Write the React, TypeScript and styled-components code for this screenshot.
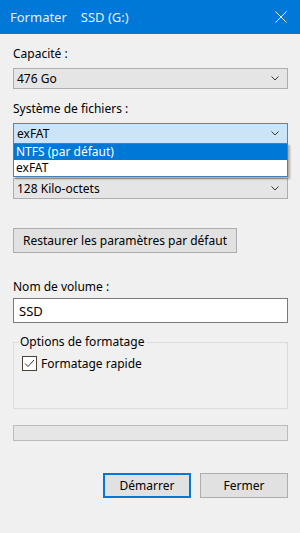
import styled, { createGlobalStyle } from 'styled-components'

const GlobalStyle = createGlobalStyle`
  html, body {
    margin: 0;
    padding: 0;
    background: #f0f0f0;
  }
  body {
    font-family: 'Noto Sans', 'Liberation Sans', sans-serif;
    font-size: 12px;
    color: #000;
  }
`

const Window = styled.div`
  width: 300px;
  height: 533px;
  background: #f0f0f0;
  display: flex;
  flex-direction: column;
  overflow: hidden;
`

const TitleBar = styled.header`
  height: 34px;
  background: #0078d7;
  color: #e6eef8;
  display: flex;
  align-items: center;
  padding: 0 13px 0 10px;
  font-size: 13px;
`

const Title = styled.div`
  flex: 1;
  display: flex;
  gap: 14px;
`

const CloseIcon = styled.svg`
  width: 12px;
  height: 12px;
`

const Body = styled.main`
  display: flex;
  flex-direction: column;
  padding: 12px 12px 0 13px;
`

const Label = styled.div<{ $top?: number; $gap?: number }>`
  line-height: 16px;
  height: 16px;
  margin-top: ${(p) => p.$top ?? 0}px;
  margin-bottom: ${(p) => p.$gap ?? 6}px;
`

const ComboWrap = styled.div`
  position: relative;
`

const Combo = styled.div<{ $focused?: boolean }>`
  height: 21px;
  box-sizing: border-box;
  display: flex;
  align-items: center;
  justify-content: space-between;
  padding: 0 8px 0 3px;
  background: ${(p) => (p.$focused ? '#cce4f7' : '#e5e5e5')};
  border: 1px solid ${(p) => (p.$focused ? '#3d8ad5' : '#adadad')};
`

const Chevron = styled.svg`
  width: 8px;
  height: 5px;
`

const DropList = styled.ul`
  position: absolute;
  top: 20px;
  left: 0;
  right: 0;
  margin: 0;
  padding: 0;
  list-style: none;
  background: #fff;
  border: 1px solid #4a7eb4;
  box-shadow: 2px 2px 2px rgba(60, 40, 20, 0.35);
  z-index: 2;
`

const DropItem = styled.li<{ $selected?: boolean }>`
  height: 16px;
  line-height: 16px;
  padding: 0 2px;
  background: ${(p) => (p.$selected ? '#0078d7' : '#fff')};
  color: ${(p) => (p.$selected ? '#fff' : '#000')};
`

const Button = styled.button<{ $primary?: boolean }>`
  height: 25px;
  box-sizing: border-box;
  font-family: inherit;
  font-size: 12px;
  color: #000;
  background: #e1e1e1;
  border: 1px solid ${(p) => (p.$primary ? '#0078d7' : '#adadad')};
  box-shadow: ${(p) => (p.$primary ? 'inset 0 0 0 1px #0078d7' : 'none')};
  padding: 0;
  width: 88px;
`

const RestoreButton = styled(Button)`
  width: 224px;
  margin-top: 29px;
  align-self: flex-start;
`

const TextInput = styled.div`
  height: 25px;
  box-sizing: border-box;
  background: #fff;
  border: 1px solid #7a7a7a;
  display: flex;
  align-items: center;
  padding: 0 5px;
  font-size: 13px;
`

const GroupBox = styled.fieldset`
  margin: 11px 0 0;
  padding: 0 8px;
  min-width: 0;
  height: 75px;
  box-sizing: border-box;
  border: 1px solid #dcdcdc;
`

const Legend = styled.legend`
  padding: 0 1px;
  margin-left: -3px;
  line-height: 16px;
`

const CheckRow = styled.label`
  display: flex;
  align-items: center;
  gap: 4px;
  margin-top: 5px;
`

const CheckBox = styled.span`
  width: 13px;
  height: 13px;
  border: 1px solid #4b4036;
  background: #fff;
  display: flex;
  align-items: center;
  justify-content: center;
`

const Progress = styled.div`
  height: 16px;
  margin-top: 16px;
  box-sizing: border-box;
  background: #e6e6e6;
  border: 1px solid #bcbcbc;
`

const Footer = styled.div`
  display: flex;
  justify-content: flex-end;
  gap: 9px;
  margin-top: 32px;
`

const ChevronDown = () => (
  <Chevron viewBox="0 0 8 5">
    <path d="M0.5 0.5 L4 4 L7.5 0.5" fill="none" stroke="#3a3530" strokeWidth="1" />
  </Chevron>
)

const App = () => {
  return (
    <Window>
      <GlobalStyle />
      <TitleBar>
        <Title>
          <span>Formater</span>
          <span>SSD (G:)</span>
        </Title>
        <CloseIcon viewBox="0 0 12 12">
          <path d="M0.5 0.5 L11.5 11.5 M11.5 0.5 L0.5 11.5" stroke="#f2f6fc" strokeWidth="1" />
        </CloseIcon>
      </TitleBar>
      <Body>
        <Label>Capacité :</Label>
        <Combo>
          <span>476 Go</span>
          <ChevronDown />
        </Combo>

        <Label $top={12}>Système de fichiers :</Label>
        <ComboWrap>
          <Combo $focused>
            <span>exFAT</span>
            <ChevronDown />
          </Combo>
          <DropList>
            <DropItem $selected>NTFS (par défaut)</DropItem>
            <DropItem>exFAT</DropItem>
          </DropList>
        </ComboWrap>

        {/* the allocation-size label sits under the open list */}
        <Label $top={12} aria-hidden />
        <Combo>
          <span>128 Kilo-octets</span>
          <ChevronDown />
        </Combo>

        <RestoreButton>Restaurer les paramètres par défaut</RestoreButton>

        <Label $top={26} $gap={3}>Nom de volume :</Label>
        <TextInput>SSD</TextInput>

        <GroupBox>
          <Legend>Options de formatage</Legend>
          <CheckRow>
            <CheckBox>
              <svg width="11" height="9" viewBox="0 0 11 9">
                <path d="M1 4.5 L4 7.5 L10 1" fill="none" stroke="#333" strokeWidth="1" />
              </svg>
            </CheckBox>
            Formatage rapide
          </CheckRow>
        </GroupBox>

        <Progress />

        <Footer>
          <Button $primary>Démarrer</Button>
          <Button>Fermer</Button>
        </Footer>
      </Body>
    </Window>
  )
}

export default App
